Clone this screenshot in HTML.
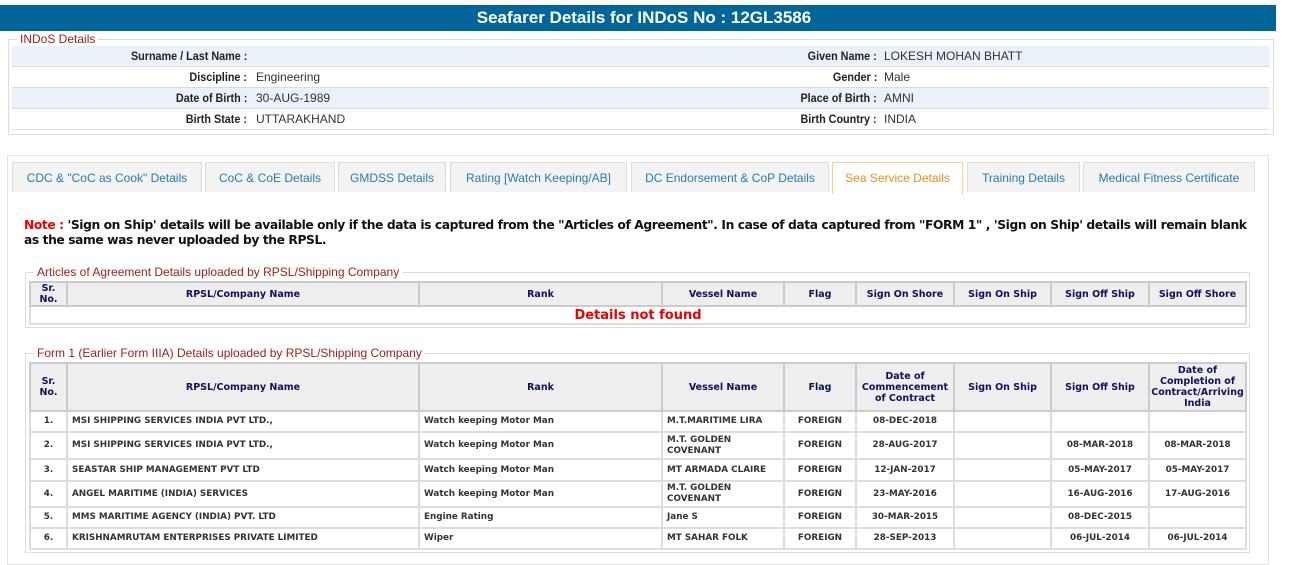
<!DOCTYPE html>
<html><head><meta charset="utf-8"><style>
*{box-sizing:border-box;margin:0;padding:0}
body{width:1297px;height:558px;background:#fff;position:relative;overflow:hidden;font-family:"Liberation Sans",Arial,sans-serif}
.a{position:absolute}
.hdr{left:0;top:5px;width:1276px;height:26px;background:#006699;color:#fff;font:bold 17px "Liberation Sans",sans-serif;text-align:center;line-height:26px;padding-left:12px}
.fs{border:1px solid #ddd}
.lg{background:#fff;color:#a02020;font-size:12px;padding:0 3px;line-height:12px}
.row{left:12px;width:1257px;height:21px;border-bottom:1px solid #d5dde6;font-size:12px;line-height:20px;color:#333}
.row.b{background:#eaf1f9}
.row span{position:absolute;white-space:nowrap}
.lb{text-align:right;color:#222;font-weight:bold;transform:scaleX(.9);transform-origin:right}
.tab{top:162px;height:30px;border:1px solid #ddd;border-bottom:none;background:#f3f3f3;color:#2a7ab0;font-size:12px;line-height:30px;text-align:center}
.tab.on{background:#fff;color:#f08c1e;border-color:#f5d28a;height:32px}
table{border-collapse:collapse;table-layout:fixed;font-family:"DejaVu Sans",Verdana,sans-serif;position:absolute;border:2px solid #bbb}
th{background:#eee;color:#101060;font-size:9.5px;font-weight:bold;border:2px solid #ccc;text-align:center;line-height:11px}
td{font-size:8.8px;font-weight:bold;color:#333;border:2px solid #ddd;padding:0 4px;line-height:11px}
td.c{text-align:center}
</style></head><body>
<div class="a hdr">Seafarer Details for INDoS No : 12GL3586</div>
<div class="a fs" style="left:8px;top:39px;width:1266px;height:96px"></div>
<div class="a lg" style="left:17px;top:33px">INDoS Details</div>
<div class="a row b" style="top:46px"><span class="lb" style="right:1022px">Surname / Last Name :</span><span class="lb" style="right:392px">Given Name :</span><span style="left:872px">LOKESH MOHAN BHATT</span></div>
<div class="a row" style="top:67px"><span class="lb" style="right:1022px">Discipline :</span><span style="left:244px">Engineering</span><span class="lb" style="right:392px">Gender :</span><span style="left:872px">Male</span></div>
<div class="a row b" style="top:88px"><span class="lb" style="right:1022px">Date of Birth :</span><span style="left:244px">30-AUG-1989</span><span class="lb" style="right:392px">Place of Birth :</span><span style="left:872px">AMNI</span></div>
<div class="a row" style="top:109px"><span class="lb" style="right:1022px">Birth State :</span><span style="left:244px">UTTARAKHAND</span><span class="lb" style="right:392px">Birth Country :</span><span style="left:872px">INDIA</span></div>

<div class="a" style="left:7px;top:155px;width:1262px;height:410px;border:1px solid #e3e3e3"></div>
<div class="a tab" style="left:12px;width:190px">CDC &amp; "CoC as Cook" Details</div>
<div class="a tab" style="left:205px;width:130px">CoC &amp; CoE Details</div>
<div class="a tab" style="left:338px;width:108px">GMDSS Details</div>
<div class="a tab" style="left:450px;width:177px">Rating [Watch Keeping/AB]</div>
<div class="a tab" style="left:631px;width:198px">DC Endorsement &amp; CoP Details</div>
<div class="a tab on" style="left:832px;width:131px">Sea Service Details</div>
<div class="a tab" style="left:967px;width:113px">Training Details</div>
<div class="a tab" style="left:1083px;width:172px">Medical Fitness Certificate</div>

<div class="a" style="left:24px;top:218px;width:1232px;font:bold 12.3px 'DejaVu Sans',Verdana,sans-serif;line-height:15px;color:#111;letter-spacing:-0.42px"><span style="color:#e00">Note : </span>'Sign on Ship' details will be available only if the data is captured from the "Articles of Agreement". In case of data captured from "FORM 1" , 'Sign on Ship' details will remain blank as the same was never uploaded by the RPSL.</div>

<div class="a fs" style="left:25px;top:272px;width:1225px;height:56px"></div>
<div class="a lg" style="left:34px;top:266px">Articles of Agreement Details uploaded by RPSL/Shipping Company</div>
<table style="left:29px;top:281px;width:1218px">
<colgroup><col style="width:37px"><col style="width:352px"><col style="width:243px"><col style="width:122px"><col style="width:72px"><col style="width:98px"><col style="width:97px"><col style="width:98px"><col></colgroup>
<tr style="height:24px"><th>Sr.<br>No.</th><th>RPSL/Company Name</th><th>Rank</th><th>Vessel Name</th><th>Flag</th><th>Sign On Shore</th><th>Sign On Ship</th><th>Sign Off Ship</th><th>Sign Off Shore</th></tr>
<tr style="height:18px"><td colspan="9" style="text-align:center;color:#e00;font:bold 13px 'DejaVu Sans',Verdana,sans-serif;border-color:#ddd">Details not found</td></tr>
</table>

<div class="a fs" style="left:25px;top:353px;width:1225px;height:200px"></div>
<div class="a lg" style="left:34px;top:347px">Form 1 (Earlier Form IIIA) Details uploaded by RPSL/Shipping Company</div>
<table style="left:29px;top:362px;width:1218px">
<colgroup><col style="width:37px"><col style="width:352px"><col style="width:243px"><col style="width:122px"><col style="width:72px"><col style="width:98px"><col style="width:97px"><col style="width:98px"><col></colgroup>
<tr style="height:48px"><th>Sr.<br>No.</th><th>RPSL/Company Name</th><th>Rank</th><th>Vessel Name</th><th>Flag</th><th>Date of Commencement of Contract</th><th>Sign On Ship</th><th>Sign Off Ship</th><th>Date of Completion of Contract/Arriving India</th></tr>
<tr style="height:21px"><td class="c">1.</td><td>MSI SHIPPING SERVICES INDIA PVT LTD.,</td><td>Watch keeping Motor Man</td><td>M.T.MARITIME LIRA</td><td class="c">FOREIGN</td><td class="c">08-DEC-2018</td><td></td><td></td><td></td></tr>
<tr style="height:27px"><td class="c">2.</td><td>MSI SHIPPING SERVICES INDIA PVT LTD.,</td><td>Watch keeping Motor Man</td><td>M.T. GOLDEN<br>COVENANT</td><td class="c">FOREIGN</td><td class="c">28-AUG-2017</td><td></td><td class="c">08-MAR-2018</td><td class="c">08-MAR-2018</td></tr>
<tr style="height:22px"><td class="c">3.</td><td>SEASTAR SHIP MANAGEMENT PVT LTD</td><td>Watch keeping Motor Man</td><td>MT ARMADA CLAIRE</td><td class="c">FOREIGN</td><td class="c">12-JAN-2017</td><td></td><td class="c">05-MAY-2017</td><td class="c">05-MAY-2017</td></tr>
<tr style="height:26px"><td class="c">4.</td><td>ANGEL MARITIME (INDIA) SERVICES</td><td>Watch keeping Motor Man</td><td>M.T. GOLDEN<br>COVENANT</td><td class="c">FOREIGN</td><td class="c">23-MAY-2016</td><td></td><td class="c">16-AUG-2016</td><td class="c">17-AUG-2016</td></tr>
<tr style="height:21px"><td class="c">5.</td><td>MMS MARITIME AGENCY (INDIA) PVT. LTD</td><td>Engine Rating</td><td>Jane S</td><td class="c">FOREIGN</td><td class="c">30-MAR-2015</td><td></td><td class="c">08-DEC-2015</td><td></td></tr>
<tr style="height:21px"><td class="c">6.</td><td>KRISHNAMRUTAM ENTERPRISES PRIVATE LIMITED</td><td>Wiper</td><td>MT SAHAR FOLK</td><td class="c">FOREIGN</td><td class="c">28-SEP-2013</td><td></td><td class="c">06-JUL-2014</td><td class="c">06-JUL-2014</td></tr>
</table>
</body></html>
